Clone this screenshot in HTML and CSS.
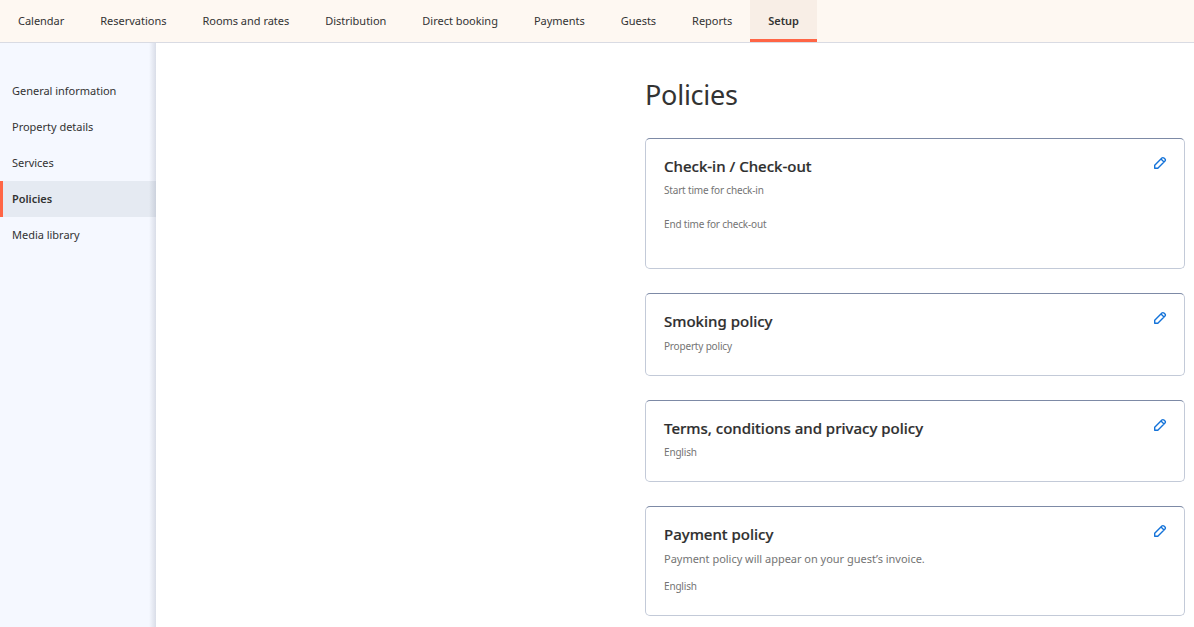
FILE: index.html
```html
<!DOCTYPE html>
<html lang="en">
<head>
<meta charset="utf-8">
<title>Policies</title>
<link rel="stylesheet" href="styles.css">
</head>
<body>
<svg class="defs" aria-hidden="true"><symbol id="pencil" viewBox="0 0 14 14"><path d="M1.7 9.2 8.9 2a1.4 1.4 0 0 1 2 0l1.1 1.1a1.4 1.4 0 0 1 0 2L4.8 12.3H1.7ZM8 3 11 6"/></symbol></svg>
<nav class="topnav">
<a class="tab">Calendar</a><a class="tab">Reservations</a><a class="tab">Rooms and rates</a><a class="tab">Distribution</a><a class="tab">Direct booking</a><a class="tab">Payments</a><a class="tab">Guests</a><a class="tab">Reports</a><a class="tab tab-active">Setup</a>
</nav>
<div class="layout">
<aside class="sidebar">
<a class="side-link">General information</a>
<a class="side-link">Property details</a>
<a class="side-link">Services</a>
<a class="side-link side-active">Policies</a>
<a class="side-link">Media library</a>
</aside>
<main class="content">
<h1 class="title">Policies</h1>
<section class="card card-checkin"><h2 class="heading">Check-in / Check-out</h2><p class="label">Start time for check-in</p><p class="label label-end">End time for check-out</p><svg class="edit"><use href="#pencil"/></svg></section>
<section class="card card-smoking"><h2 class="heading">Smoking policy</h2><p class="label label-low">Property policy</p><svg class="edit"><use href="#pencil"/></svg></section>
<section class="card card-terms"><h2 class="heading">Terms, conditions and privacy policy</h2><p class="label">English</p><svg class="edit"><use href="#pencil"/></svg></section>
<section class="card card-payment"><h2 class="heading">Payment policy</h2><p class="description">Payment policy will appear on your guest’s invoice.</p><p class="label">English</p><svg class="edit"><use href="#pencil"/></svg></section>
</main>
</div>
</body>
</html>
```
FILE: styles.css
```css
* { box-sizing: border-box; }
body { margin: 0; height: 627px; overflow: hidden; background: #fff; color: #333; font-family: "Noto Sans", sans-serif; font-size: 11px; letter-spacing: -.02px; }
.defs { position: absolute; width: 0; height: 0; }
.topnav { display: flex; height: 43px; background: #fef8f2; border-bottom: 1px solid #d9dbe3; }
.tab { height: 42px; padding: 0 18px; line-height: 42px; white-space: nowrap; }
.tab-active { background: #f8eee6; border-bottom: 3px solid #ff6545; font-weight: 600; }
.layout { display: flex; height: 584px; }
.sidebar { position: relative; width: 156px; flex: none; padding-top: 30px; background: #f5f8ff; }
.sidebar::after { content: ""; position: absolute; top: 0; right: 0; bottom: 0; width: 7px; background: linear-gradient(to right, rgba(60, 70, 100, 0), rgba(60, 70, 100, .15)); }
.side-link { display: block; height: 36px; padding-left: 12px; line-height: 36px; }
.side-active { padding-left: 9px; border-left: 3px solid #ff6545; background: #e5eaf2; font-weight: 600; }
.content { width: 540px; margin-left: 489px; padding-top: 34px; }
.title { margin: 0 0 25px; font-size: 27px; letter-spacing: -.25px; line-height: 36px; font-weight: 400; }
.card { position: relative; margin-bottom: 24px; padding: 15px 18px; border: 1px solid #c3cad8; border-top-color: #7d8aa6; border-radius: 5px; }
.card-checkin { height: 131px; }
.card-smoking { height: 83px; }
.card-terms { height: 82px; }
.card-payment { height: 110px; margin-bottom: 0; }
.heading { margin: 0; color: #2e2e2e; font-size: 15px; line-height: 24px; letter-spacing: 0; font-weight: 500; -webkit-text-stroke: .2px #2e2e2e; }
.label { margin: 4px 0 0; color: #747474; font-size: 10px; line-height: 16px; letter-spacing: -.18px; }
.label-low { margin-top: 5px; }
.label-end { margin-top: 18px; }
.description { margin: 1px 0 7px; color: #747474; font-size: 11px; line-height: 24px; }
.description + .label { margin-top: 3px; }
.edit { position: absolute; right: 17px; top: 17px; width: 14px; height: 14px; fill: none; stroke: #1473d9; stroke-width: 1.4; stroke-linejoin: round; }
```
